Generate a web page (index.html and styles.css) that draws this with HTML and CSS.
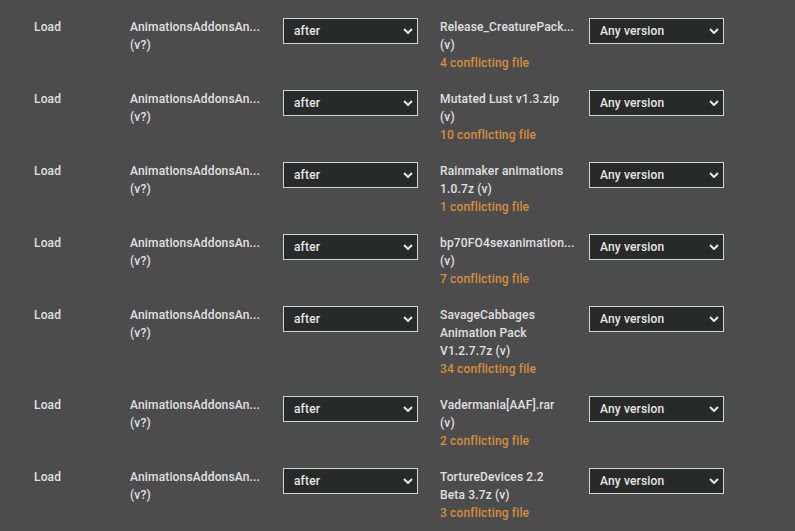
FILE: index.html
```html
<!DOCTYPE html>
<html lang="en">
<head>
    <meta charset="UTF-8">
    <meta name="viewport" content="width=device-width, initial-scale=1.0">
    <title>Conflict rules</title>
    <link rel="stylesheet" href="styles.css">
</head>
<body>
    <div class="rules">
        <div class="rule">
            <div class="verb">Load</div>
            <div class="mod">AnimationsAddonsAn... (v?)</div>
            <div class="pick"><select><option>after</option><option>before</option></select><svg class="chev" viewBox="0 0 10 6"><path d="M1 1l4 4 4-4"/></svg></div>
            <div class="mod">Release_CreaturePack... (v)<div class="count">4 conflicting file</div></div>
            <div class="pick"><select><option>Any version</option></select><svg class="chev" viewBox="0 0 10 6"><path d="M1 1l4 4 4-4"/></svg></div>
        </div>
        <div class="rule">
            <div class="verb">Load</div>
            <div class="mod">AnimationsAddonsAn... (v?)</div>
            <div class="pick"><select><option>after</option><option>before</option></select><svg class="chev" viewBox="0 0 10 6"><path d="M1 1l4 4 4-4"/></svg></div>
            <div class="mod">Mutated Lust v1.3.zip (v)<div class="count">10 conflicting file</div></div>
            <div class="pick"><select><option>Any version</option></select><svg class="chev" viewBox="0 0 10 6"><path d="M1 1l4 4 4-4"/></svg></div>
        </div>
        <div class="rule">
            <div class="verb">Load</div>
            <div class="mod">AnimationsAddonsAn... (v?)</div>
            <div class="pick"><select><option>after</option><option>before</option></select><svg class="chev" viewBox="0 0 10 6"><path d="M1 1l4 4 4-4"/></svg></div>
            <div class="mod">Rainmaker animations 1.0.7z (v)<div class="count">1 conflicting file</div></div>
            <div class="pick"><select><option>Any version</option></select><svg class="chev" viewBox="0 0 10 6"><path d="M1 1l4 4 4-4"/></svg></div>
        </div>
        <div class="rule">
            <div class="verb">Load</div>
            <div class="mod">AnimationsAddonsAn... (v?)</div>
            <div class="pick"><select><option>after</option><option>before</option></select><svg class="chev" viewBox="0 0 10 6"><path d="M1 1l4 4 4-4"/></svg></div>
            <div class="mod">bp70FO4sexanimation... (v)<div class="count">7 conflicting file</div></div>
            <div class="pick"><select><option>Any version</option></select><svg class="chev" viewBox="0 0 10 6"><path d="M1 1l4 4 4-4"/></svg></div>
        </div>
        <div class="rule">
            <div class="verb">Load</div>
            <div class="mod">AnimationsAddonsAn... (v?)</div>
            <div class="pick"><select><option>after</option><option>before</option></select><svg class="chev" viewBox="0 0 10 6"><path d="M1 1l4 4 4-4"/></svg></div>
            <div class="mod">SavageCabbages Animation Pack V1.2.7.7z (v)<div class="count">34 conflicting file</div></div>
            <div class="pick"><select><option>Any version</option></select><svg class="chev" viewBox="0 0 10 6"><path d="M1 1l4 4 4-4"/></svg></div>
        </div>
        <div class="rule">
            <div class="verb">Load</div>
            <div class="mod">AnimationsAddonsAn... (v?)</div>
            <div class="pick"><select><option>after</option><option>before</option></select><svg class="chev" viewBox="0 0 10 6"><path d="M1 1l4 4 4-4"/></svg></div>
            <div class="mod">Vadermania[AAF].rar (v)<div class="count">2 conflicting file</div></div>
            <div class="pick"><select><option>Any version</option></select><svg class="chev" viewBox="0 0 10 6"><path d="M1 1l4 4 4-4"/></svg></div>
        </div>
        <div class="rule">
            <div class="verb">Load</div>
            <div class="mod">AnimationsAddonsAn... (v?)</div>
            <div class="pick"><select><option>after</option><option>before</option></select><svg class="chev" viewBox="0 0 10 6"><path d="M1 1l4 4 4-4"/></svg></div>
            <div class="mod">TortureDevices 2.2 Beta 3.7z (v)<div class="count">3 conflicting file</div></div>
            <div class="pick"><select><option>Any version</option></select><svg class="chev" viewBox="0 0 10 6"><path d="M1 1l4 4 4-4"/></svg></div>
        </div>
    </div>
</body>
</html>
```
FILE: styles.css
```css
body {
    margin: 0;
    background-color: #4c4c4c;
    font-family: Roboto, "Liberation Sans", sans-serif;
    font-size: 12px;
    font-weight: 500;
    line-height: 18px;
    letter-spacing: 0.15px;
    color: #e0e0e0;
}

.rules {
    padding-top: 9px;
}

.rule {
    display: grid;
    grid-template-columns: 96px 153px 157px 149px 135px;
    align-items: start;
    padding: 9px 0 9px 34px;
}

.mod {
    width: 130px;
}

.count {
    color: #d68c3e;
}

.pick {
    position: relative;
    width: 135px;
}

.pick select {
    appearance: none;
    -webkit-appearance: none;
    display: block;
    width: 135px;
    height: 26px;
    margin: 0;
    padding: 0 24px 0 10px;
    background-color: #282a2a;
    border: 1px solid #d4d4d4;
    border-radius: 0;
    color: #e6e6e6;
    font-family: inherit;
    font-size: 12px;
    font-weight: 500;
    letter-spacing: inherit;
    outline: none;
}

.chev {
    position: absolute;
    right: 5px;
    top: 10px;
    width: 10px;
    height: 6px;
    fill: none;
    stroke: #e6e6e6;
    stroke-width: 2;
    pointer-events: none;
}
```
